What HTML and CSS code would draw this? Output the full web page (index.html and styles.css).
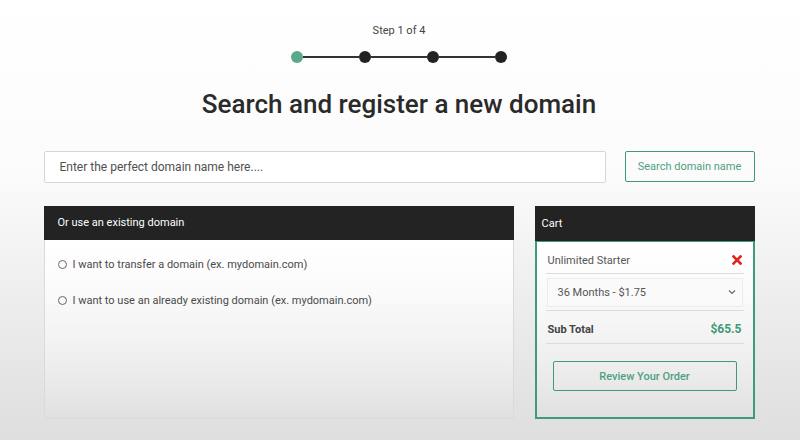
FILE: index.html
```html
<!DOCTYPE html>
<html lang="en">
<head>
    <meta charset="UTF-8">
    <meta name="viewport" content="width=device-width, initial-scale=1.0">
    <title>Register a domain</title>
    <link rel="stylesheet" href="styles.css">
</head>
<body>
    <div class="page">
        <div class="step-label">Step 1 of 4</div>
        <div class="stepper">
            <span class="dot active"></span>
            <span class="line"></span>
            <span class="dot"></span>
            <span class="line"></span>
            <span class="dot"></span>
            <span class="line"></span>
            <span class="dot"></span>
        </div>

        <h1>Search and register a new domain</h1>

        <div class="search-row">
            <div class="search-input">Enter the perfect domain name here....</div>
            <button class="btn-outline search-btn">Search domain name</button>
        </div>

        <div class="panels">
            <div class="panel existing">
                <div class="panel-head">Or use an existing domain</div>
                <div class="panel-body">
                    <label class="radio-row"><span class="radio"></span>I want to transfer a domain (ex. mydomain.com)</label>
                    <label class="radio-row"><span class="radio"></span>I want to use an already existing domain (ex. mydomain.com)</label>
                </div>
            </div>

            <div class="panel cart">
                <div class="panel-head">Cart</div>
                <div class="cart-body">
                    <div class="cart-row item">
                        <span>Unlimited Starter</span>
                        <svg class="remove" width="10" height="10" viewBox="0 0 10 10">
                            <path d="M1.5 1.5 L8.5 8.5 M8.5 1.5 L1.5 8.5" stroke="#e0241b" stroke-width="2.6" stroke-linecap="square"/>
                        </svg>
                    </div>
                    <div class="cart-row term">
                        <div class="select">
                            <span>36 Months - $1.75</span>
                            <svg width="8" height="6" viewBox="0 0 8 6">
                                <path d="M1 1.5 L4 4.5 L7 1.5" fill="none" stroke="#666" stroke-width="1.1"/>
                            </svg>
                        </div>
                    </div>
                    <div class="cart-row subtotal">
                        <span>Sub Total</span>
                        <span class="amount">$65.5</span>
                    </div>
                    <button class="btn-outline review-btn">Review Your Order</button>
                </div>
            </div>
        </div>
    </div>
</body>
</html>
```

FILE: styles.css
```css
body {
    font-family: Roboto, "Liberation Sans", sans-serif;
    background: linear-gradient(180deg, #ffffff 0%, #fbfbfb 40%, #dedede 100%);
    color: #222;
    margin: 0;
    min-height: 440px;
}
.page {
    width: 711px;
    margin: 0 auto;
    padding-top: 24px;
    position: relative;
    left: -1px;
}
.step-label {
    text-align: center;
    font-size: 11px;
    line-height: 14px;
    color: #444;
}
.stepper {
    width: 216px;
    margin: 13px auto 0;
    display: flex;
    align-items: center;
}
.dot {
    width: 12px;
    height: 12px;
    border-radius: 50%;
    background: #222;
    flex: none;
}
.dot.active {
    background: #5aa98b;
}
.line {
    flex: 1;
    height: 1.5px;
    background: #333;
}
h1 {
    margin: 25px 0 0;
    text-align: center;
    font-size: 26px;
    line-height: 32px;
    font-weight: 500;
    color: #2a2a2a;
}
.search-row {
    margin-top: 31px;
    display: flex;
    gap: 19px;
}
.search-input {
    flex: 1;
    height: 32px;
    box-sizing: border-box;
    border: 1px solid #d6d6d6;
    border-radius: 2px;
    background: #fff;
    padding-left: 15px;
    font-size: 12px;
    line-height: 30px;
    color: #505050;
}
.btn-outline {
    font-family: inherit;
    background: transparent;
    border: 1.5px solid #3f9a78;
    border-radius: 2px;
    color: #4f9f80;
    cursor: pointer;
}
.search-btn {
    width: 130px;
    height: 31px;
    font-size: 11px;
}
.panels {
    margin-top: 23px;
    display: flex;
    gap: 21px;
}
.panel {
    height: 213px;
    display: flex;
    flex-direction: column;
}
.existing {
    width: 470px;
}
.cart {
    width: 220px;
}
.panel-head {
    height: 34px;
    flex: none;
    background: #232323;
    color: #fff;
    font-size: 11px;
    line-height: 34px;
    padding-left: 14px;
}
.cart .panel-head {
    padding-left: 7px;
    height: 35px;
    line-height: 35px;
}
.panel-body {
    flex: 1;
    border: 1px solid #dadada;
    border-top: none;
    padding-top: 17px;
    background: linear-gradient(180deg, #ffffff 0%, rgba(255, 255, 255, 0) 100%);
}
.radio-row {
    display: flex;
    align-items: center;
    height: 14px;
    margin-bottom: 22px;
    padding-left: 13px;
    font-size: 11px;
    color: #4a4a4a;
}
.radio {
    width: 7px;
    height: 7px;
    border: 1px solid #666;
    border-radius: 50%;
    margin-right: 6px;
}
.cart-body {
    flex: 1;
    border: 2px solid #3f9a78;
    border-top-width: 1.5px;
    padding: 0 9px;
    background: linear-gradient(180deg, #ffffff 0%, rgba(255, 255, 255, 0) 100%);
}
.cart-row {
    display: flex;
    align-items: center;
    justify-content: space-between;
    border-bottom: 1px solid #dcdcdc;
    font-size: 11px;
}
.item {
    height: 26px;
    padding: 5px 2px 0;
    color: #555;
}
.term {
    height: 36px;
}
.select {
    flex: 1;
    margin: 0 1px;
    height: 27px;
    display: flex;
    align-items: center;
    justify-content: space-between;
    padding: 0 6px 0 10px;
    background: #fafafa;
    border: 1px solid #ececec;
    font-size: 11px;
    color: #555;
}
.subtotal {
    height: 28px;
    padding: 4px 2px 0;
    font-weight: 700;
    color: #444;
}
.amount {
    color: #3f9a78;
    font-size: 12px;
}
.review-btn {
    display: block;
    width: 184px;
    height: 30px;
    margin: 17px auto 0;
    font-size: 11px;
    font-weight: 500;
}
```
